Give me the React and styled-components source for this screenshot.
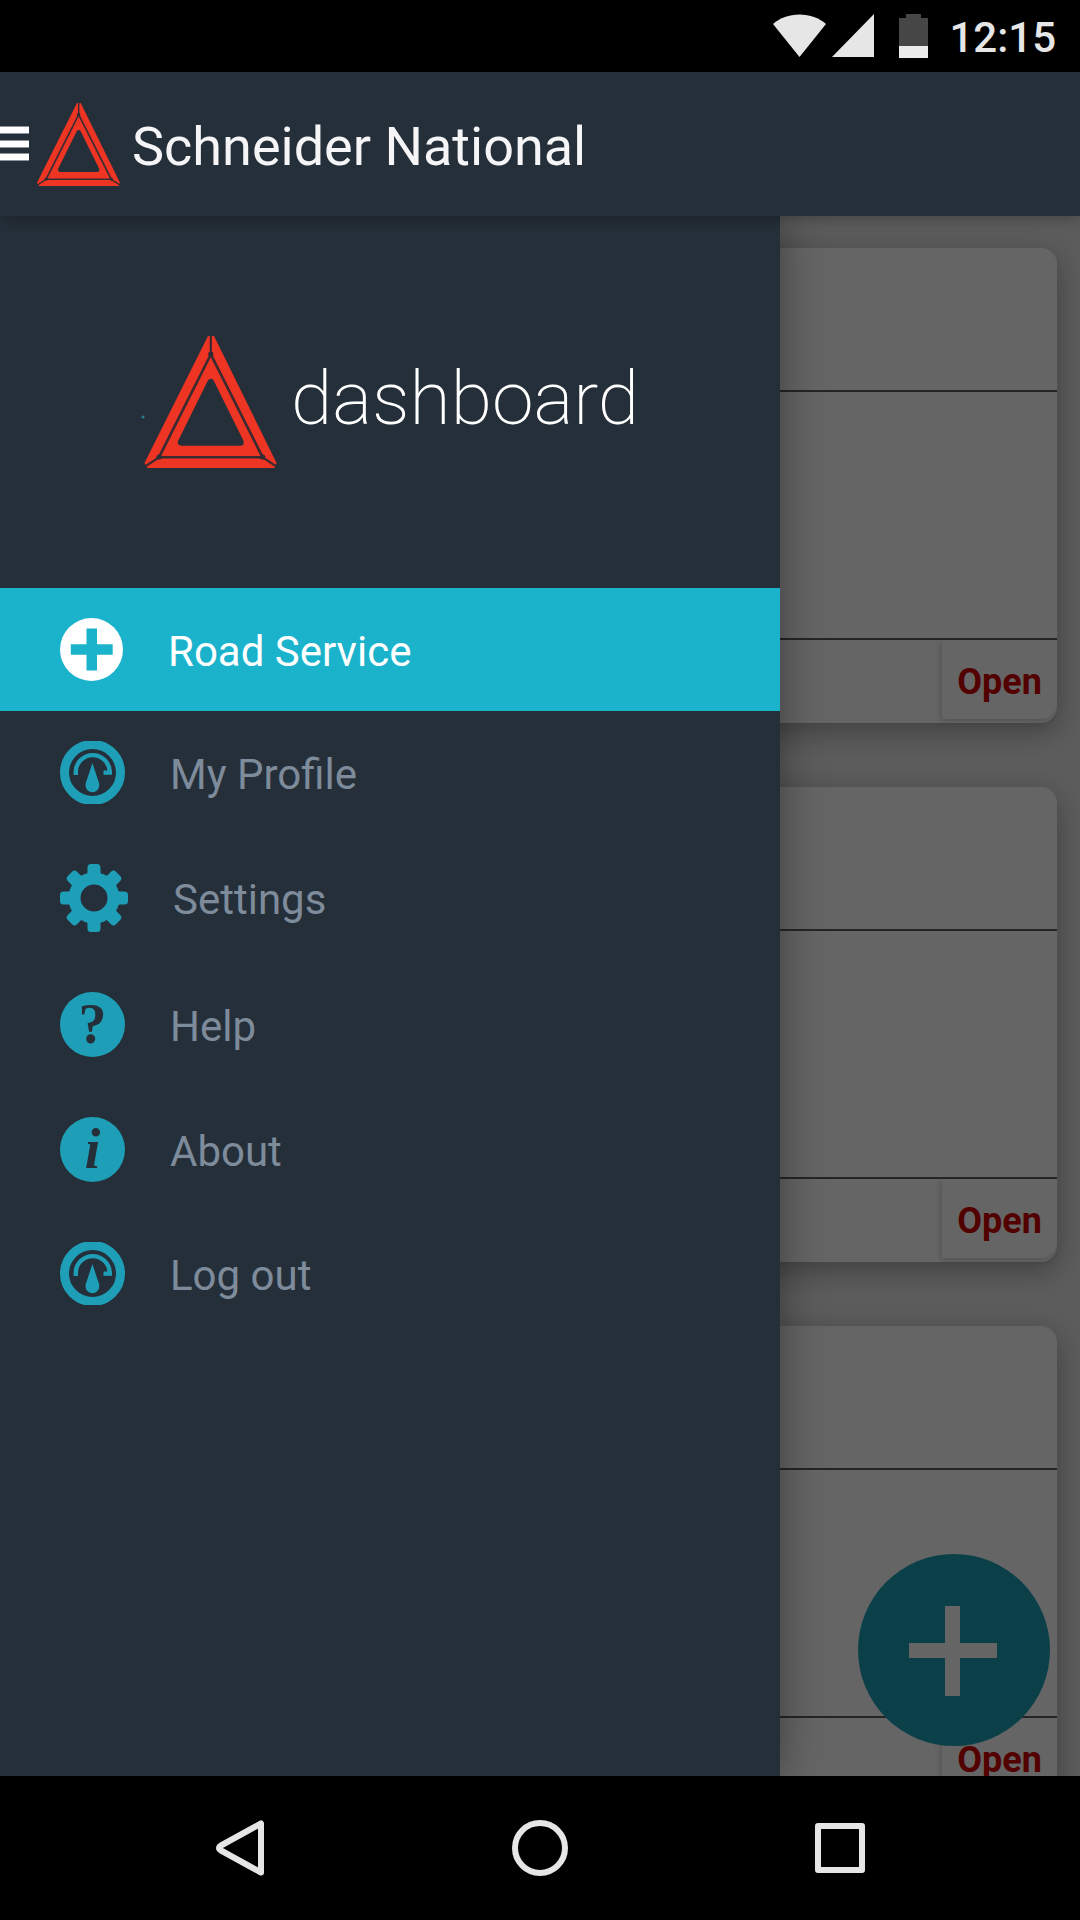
import styled, { createGlobalStyle, css } from "styled-components";
import { useState } from "react";

const GlobalStyle = createGlobalStyle`
  * {
    box-sizing: border-box;
  }
  body {
    margin: 0;
    background: #000;
    font-family: Roboto, "Liberation Sans", sans-serif;
  }
  button {
    border: 0;
    padding: 0;
    background: none;
    font-family: inherit;
    cursor: pointer;
  }
  svg {
    display: block;
    flex: none;
  }
`;

const Screen = styled.div`
  display: flex;
  flex-direction: column;
  height: 100vh;
  overflow: hidden;
`;

const StatusBar = styled.div`
  display: flex;
  align-items: center;
  justify-content: flex-end;
  flex: none;
  height: 72px;
  padding-right: 24px;
  background: #000;
  color: #e6e6e6;
`;

const StatusIcons = styled.div`
  display: flex;
  gap: 6px;
  margin-right: 21px;
`;

const Clock = styled.time`
  padding-top: 4px;
  font-size: 42px;
  font-weight: 500;
  line-height: 48px;
`;

const Header = styled.header`
  position: relative;
  z-index: 3;
  display: flex;
  align-items: center;
  gap: 8px;
  flex: none;
  height: 144px;
  background: #252f39;
  box-shadow: 0 2px 14px rgba(0, 0, 0, 0.3);
`;

const Title = styled.h1`
  margin: 0;
  padding: 6px 0 0 4px;
  color: #f5f5f7;
  font-size: 54px;
  font-weight: 400;
  line-height: 64px;
`;

const Content = styled.main`
  position: relative;
  flex: 1;
  min-height: 0;
  overflow: hidden;
  background: #e6e6e6;
`;

const CardList = styled.div`
  display: flex;
  flex-direction: column;
  gap: 64px;
  padding: 32px 23px;
`;

const Card = styled.article`
  border-radius: 16px;
  background: #fdfdfd;
  box-shadow: 0 8px 28px rgba(0, 0, 0, 0.32);
`;

const CardHeader = styled.div`
  height: 144px;
  border-bottom: 2px solid #5c5c5c;
`;

const CardBody = styled.div`
  height: 248px;
  border-bottom: 2px solid #5c5c5c;
`;

const CardFooter = styled.div`
  display: flex;
  justify-content: flex-end;
  height: 83px;
  padding-bottom: 4px;
`;

const OpenButton = styled.button`
  padding: 4px 15px 0;
  border-radius: 0 0 16px 0;
  background: #fdfdfd;
  box-shadow: -1px 2px 6px rgba(0, 0, 0, 0.2);
  clip-path: inset(0 0 -12px -12px);
  color: #cc0000;
  font-size: 36px;
  font-weight: 700;
`;

const AddButton = styled.button`
  position: absolute;
  right: 30px;
  bottom: 30px;
  border-radius: 50%;
  background: #1ea0b6;
`;

const Scrim = styled.div`
  position: absolute;
  inset: 0;
  z-index: 1;
  background: rgba(0, 0, 0, 0.6);
`;

const Drawer = styled.aside`
  position: absolute;
  top: 0;
  bottom: 0;
  left: 0;
  z-index: 2;
  width: 780px;
  max-width: calc(100% - 96px);
  background: #252f39;
  box-shadow: 0 0 40px rgba(0, 0, 0, 0.4);
`;

const Brand = styled.div`
  display: flex;
  justify-content: center;
  gap: 14px;
  padding: 120px 0;
`;

const BrandName = styled.span`
  color: #fff;
  font-size: 75px;
  font-weight: 200;
  line-height: 124px;
`;

const MenuItem = styled.a`
  display: flex;
  align-items: center;
  gap: 45px;
  padding: 30px 60px;
  color: #7e8b9b;
  font-size: 42px;
  line-height: 48px;
  text-decoration: none;

  ${({ $active }) =>
    $active &&
    css`
      background: #1bb3cc;
      color: #fff;
    `}
`;

const MenuLabel = styled.span`
  padding-top: 4px;
`;

const Disc = styled.span`
  width: 65px;
  height: 65px;
  border-radius: 50%;
  background: #1f9fb7;
  color: #252f39;
  font-family: "Liberation Serif", serif;
  font-size: 56px;
  font-style: ${({ $italic }) => ($italic ? "italic" : "normal")};
  font-weight: 700;
  line-height: 64px;
  text-align: center;
`;

const NavBar = styled.nav`
  display: flex;
  align-items: center;
  justify-content: center;
  gap: 189px;
  flex: none;
  height: 144px;
  background: #000;
`;

const Triangle = ({ width, height, viewBox, dot }) => (
  <svg width={width} height={height} viewBox={viewBox} aria-hidden="true">
    {dot && <circle cx="2" cy="81" r="1.6" fill="#2b7e8e" />}
    <path d="M67 0h6l62.500 127-2 5H6.500l-3-5z" fill="#ee3524" />
    <g stroke="#3a2a31" fill="none">
      <path d="M69.800 18.500 18 121.300h103.600z" strokeWidth="2.600" />
      <path d="M69.800 0v18M18 121.300 4 130.500M121.600 121.300l14 9.200" strokeWidth="2.200" />
    </g>
    <g fill="#2b2c35">
      <circle cx="69.800" cy="18" r="2.600" />
      <circle cx="18" cy="121" r="2.600" />
      <circle cx="121.600" cy="121" r="2.600" />
    </g>
    <path
      d="M69.800 46.500 40.300 106.200h59z"
      fill="#252f39"
      stroke="#252f39"
      strokeWidth="7"
      strokeLinejoin="round"
    />
  </svg>
);

const PlusIcon = () => (
  <svg width="63" height="63" viewBox="0 0 63 63" aria-hidden="true">
    <circle cx="31.500" cy="31.500" r="31.500" fill="#fff" />
    <path d="M26.500 10.500h10.500v15.700h15.700v10.500H37v15.800H26.500V36.700H10.800V26.200h15.700z" fill="#1bb3cc" />
  </svg>
);

const GaugeIcon = () => (
  <svg width="65" height="63" viewBox="0 0 65 63" aria-hidden="true">
    <circle cx="32.500" cy="31.500" r="28" fill="none" stroke="#1f9fb7" strokeWidth="9" />
    <path d="M15.800 34v-3a16.700 16.700 0 0 1 33.800 0v2" fill="none" stroke="#1f9fb7" strokeWidth="4.400" />
    <path d="M43.500 29.500h8.500v4.300h-8.500z" fill="#1f9fb7" />
    <path d="M32.400 22l5.600 17c.8 2 1.300 3.500 1.300 5.300a6.900 6.900 0 0 1-13.800 0c0-1.800.5-3.300 1.300-5.300z" fill="#1f9fb7" />
  </svg>
);

const GearIcon = () => (
  <svg width="68" height="68" viewBox="0 0 68 68" aria-hidden="true">
    <circle cx="34" cy="34" r="19.500" fill="none" stroke="#1f9fb7" strokeWidth="12" />
    {[0, 45, 90, 135, 180, 225, 270, 315].map((angle) => (
      <path
        key={angle}
        d="M24.500 11.800q3-1 3-3.800V3.500q0-3.500 3.500-3.500h6q3.500 0 3.500 3.500V8q0 2.800 3 3.800V15h-19z"
        transform={`rotate(${angle} 34 34)`}
        fill="#1f9fb7"
      />
    ))}
  </svg>
);

const items = [
  { label: "Road Service", icon: <PlusIcon /> },
  { label: "My Profile", icon: <GaugeIcon /> },
  { label: "Settings", icon: <GearIcon /> },
  { label: "Help", icon: <Disc aria-hidden="true">?</Disc> },
  { label: "About", icon: <Disc $italic aria-hidden="true">i</Disc> },
  { label: "Log out", icon: <GaugeIcon /> },
];

export default function App() {
  const [open, setOpen] = useState(true);
  const [active, setActive] = useState("Road Service");

  return (
    <Screen>
      <GlobalStyle />
      <StatusBar>
        <StatusIcons>
          <svg width="53" height="44" viewBox="0 0 53 44" fill="#e6e6e6">
            <path d="M26.500 43 0 10C7 4 16 .5 26.500.5S46 4 53 10z" />
          </svg>
          <svg width="42" height="44" viewBox="0 0 42 44" fill="#e6e6e6">
            <path d="M42 0v43H0z" />
          </svg>
          <svg width="48" height="44" viewBox="-19 0 48 44">
            <path d="M7 0h15v4h7v28H0V4h7z" fill="#464646" />
            <path d="M0 32h29v12H0z" fill="#ececec" />
          </svg>
        </StatusIcons>
        <Clock>12:15</Clock>
      </StatusBar>

      <Header>
        <button aria-label="Menu" onClick={() => setOpen(!open)}>
          <svg width="29" height="36" viewBox="0 0 29 36">
            <path d="M0 0h29v8H0zM0 14h29v8H0zM0 27h29v8H0z" fill="#8d939b" />
            <path d="M0 1h29v6H0zM0 15h29v6H0zM0 28h29v6H0z" fill="#fff" />
          </svg>
        </button>
        <Triangle width="83" height="83" viewBox="3.500 0 132 132" />
        <Title>Schneider National</Title>
      </Header>

      <Content>
        <CardList>
          {[1, 2, 3].map((id) => (
            <Card key={id}>
              <CardHeader />
              <CardBody />
              <CardFooter>
                <OpenButton>Open</OpenButton>
              </CardFooter>
            </Card>
          ))}
        </CardList>
        <AddButton aria-label="Add">
          <svg width="192" height="192" viewBox="0 0 192 192">
            <path d="M87 52h15v37h37v15h-37v38H87v-38H51V89h36z" fill="#fdfdfd" />
          </svg>
        </AddButton>

        {open && (
          <>
            <Scrim onClick={() => setOpen(false)} />
            <Drawer>
              <Brand>
                <Triangle width="136" height="132" viewBox="0 0 136 132" dot />
                <BrandName>dashboard</BrandName>
              </Brand>
              {items.map(({ label, icon }) => (
                <MenuItem
                  key={label}
                  href="#"
                  $active={label === active}
                  onClick={() => setActive(label)}
                >
                  {icon}
                  <MenuLabel>{label}</MenuLabel>
                </MenuItem>
              ))}
            </Drawer>
          </>
        )}
      </Content>

      <NavBar>
        <button aria-label="Back">
          <svg width="112" height="56" viewBox="-5 0 112 56" fill="none" stroke="#e6e6e6" strokeWidth="6" strokeLinejoin="round">
            <path d="M45 3.500v49L5 30.500Q1 28 5 25.500z" />
          </svg>
        </button>
        <button aria-label="Home">
          <svg width="56" height="56" viewBox="0 0 56 56" fill="none" stroke="#e6e6e6" strokeWidth="6">
            <circle cx="28" cy="28" r="25" />
          </svg>
        </button>
        <button aria-label="Recent apps">
          <svg width="112" height="56" viewBox="-58 0 112 56" fill="none" stroke="#e6e6e6" strokeWidth="6" strokeLinejoin="round">
            <path d="M3 6h44v44H3z" />
          </svg>
        </button>
      </NavBar>
    </Screen>
  );
}
